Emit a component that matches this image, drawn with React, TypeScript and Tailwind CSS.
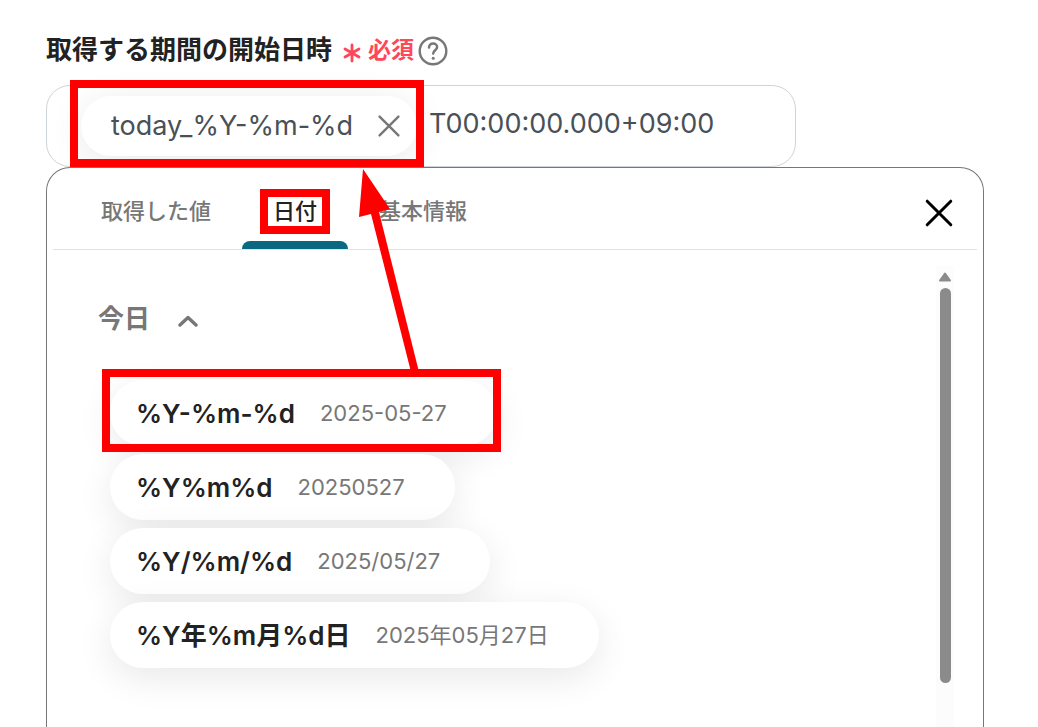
import { useState } from 'react';

type DateFormat = {
  id: string;
  pattern: string;
  sample: string;
};

const tabs = [
  { id: 'values', label: '取得した値' },
  { id: 'date', label: '日付' },
  { id: 'basic', label: '基本情報' },
];

const formats: DateFormat[] = [
  { id: 'f1', pattern: '%Y-%m-%d', sample: '2025-05-27' },
  { id: 'f2', pattern: '%Y%m%d', sample: '20250527' },
  { id: 'f3', pattern: '%Y/%m/%d', sample: '2025/05/27' },
  { id: 'f4', pattern: '%Y年%m月%d日', sample: '2025年05月27日' },
];

// Red frame drawn over the element that is being explained
function Highlight({ className }: { className: string }) {
  return <span aria-hidden="true" className={`pointer-events-none absolute z-10 border-8 border-[#ff0000] ${className}`} />;
}

function Cross({ className, strokeWidth }: { className: string; strokeWidth: number }) {
  return (
    <svg viewBox="0 0 28 28" fill="none" stroke="currentColor" strokeWidth={strokeWidth} strokeLinecap="round" className={className}>
      <path d="M3 3 25 25M25 3 3 25" />
    </svg>
  );
}

function HelpIcon() {
  return (
    <svg viewBox="0 0 30 30" fill="none" stroke="currentColor" className="h-[30px] w-[30px]">
      <circle cx="15" cy="15" r="13.3" strokeWidth="2.4" />
      <path d="M11 11.500c0-2.300 1.700-3.900 4.100-3.900 2.300 0 4 1.500 4 3.500 0 3-3.900 3.300-3.900 6.400" strokeWidth="2.500" strokeLinecap="round" />
      <circle cx="15.2" cy="22.2" r="1.500" fill="currentColor" stroke="none" />
    </svg>
  );
}

export default function App() {
  const [activeTab, setActiveTab] = useState('date');
  const [open, setOpen] = useState(true);
  const [suffix, setSuffix] = useState('T00:00:00.000+09:00');

  return (
    <div className="flex h-screen flex-col overflow-hidden bg-white pt-8 pr-[54px] pl-[46px] font-['Inter','Noto_Sans_CJK_JP',sans-serif] text-[#222]">
      {/* Label */}
      <div className="flex h-9 shrink-0 items-center">
        <label htmlFor="start" className="text-[26px] leading-9 font-semibold whitespace-nowrap">取得する期間の開始日時</label>
        <svg viewBox="0 0 20 20" stroke="#ff4757" strokeWidth="2.8" strokeLinecap="round" className="mt-1.5 ml-2.5 h-5 w-5">
          <path d="M10 2v16M3 6l14 8M17 6 3 14" />
        </svg>
        <span className="ml-1.5 text-[23px] leading-9 font-semibold whitespace-nowrap text-[#ff4757]">必須</span>
        <button type="button" aria-label="ヘルプ" className="mt-0.5 ml-1 text-[#777]">
          <HelpIcon />
        </button>
      </div>

      {/* Field */}
      <div className="mt-[17px] flex h-[82px] w-4/5 shrink-0 items-center rounded-3xl border border-[#ced4da] pl-[34px] text-[27px] text-[#495057]">
        <div className="relative flex h-[60px] shrink-0 items-center rounded-full bg-white pr-4 pl-[30px] shadow-[0_6px_36px_rgba(0,0,0,0.09)]">
          <span className="w-[250px] leading-9">today_%Y-%m-%d</span>
          <button type="button" aria-label="削除" className="ml-4 text-[#777]">
            <Cross className="h-6 w-6" strokeWidth={2.8} />
          </button>
          <Highlight className="-top-4 -right-[7px] -bottom-[11px] -left-[11px]" />
        </div>
        <input
          id="start"
          type="text"
          value={suffix}
          onChange={e => setSuffix(e.target.value)}
          className="mb-1 ml-3 min-w-0 flex-1 bg-transparent outline-none"
        />
      </div>

      {/* Picker panel */}
      <div className="relative flex min-h-0 flex-1 flex-col rounded-t-3xl border border-b-0 border-[#777] bg-white px-1.5">
        <div className="flex h-[82px] shrink-0 items-stretch justify-between border-b border-[#e2e2e2] pr-[23px] pl-[17px]">
          <div role="tablist" className="flex">
            {tabs.map(tab => (
              <button
                key={tab.id}
                type="button"
                role="tab"
                aria-selected={activeTab === tab.id}
                onClick={() => setActiveTab(tab.id)}
                className={`relative px-[31px] pt-1.5 text-[22px] font-medium whitespace-nowrap ${activeTab === tab.id ? 'text-[#222]' : 'text-[#777]'}`}
              >
                {tab.label}
                {activeTab === tab.id && <span className="absolute inset-x-0 bottom-0 h-2 rounded-t-lg bg-[#0a6880]" />}
                {tab.id === 'date' && <Highlight className="inset-x-[18px] top-[21px] bottom-[15px]" />}
              </button>
            ))}
          </div>
          <button type="button" aria-label="閉じる" className="mt-2 self-center">
            <Cross className="h-[30px] w-[30px] text-black" strokeWidth={2.8} />
          </button>
        </div>

        <div className="flex min-h-0 flex-1 justify-between overflow-hidden">
          <div className="pt-[51px] pl-[45px]">
            <button
              type="button"
              aria-expanded={open}
              onClick={() => setOpen(!open)}
              className="flex h-9 items-center gap-7 text-[26px] leading-9 font-semibold text-[#777]"
            >
              今日
              <svg viewBox="0 0 20 12" fill="none" stroke="currentColor" strokeWidth="3.4" strokeLinecap="round" strokeLinejoin="round" className={`mt-1 h-3 w-5 ${open ? '' : 'rotate-180'}`}>
                <path d="M2 10 10 2.500 18 10" />
              </svg>
            </button>

            {open && (
              <ul className="mt-[43px] ml-3 flex flex-col items-start gap-2">
                {formats.map(format => (
                  <li key={format.id} className="relative">
                    <button
                      type="button"
                      className="flex h-[66px] items-center gap-[25px] rounded-full bg-white pr-[50px] pl-[26px] whitespace-nowrap shadow-[0_10px_36px_rgba(0,0,0,0.09)]"
                    >
                      <span className="text-[26px] font-semibold">{format.pattern}</span>
                      <span className="text-[22px] text-[#777]">{format.sample}</span>
                    </button>
                    {format.id === 'f1' && <Highlight className="-top-[11px] -right-1 -bottom-1.5 -left-2" />}
                  </li>
                ))}
              </ul>
            )}
          </div>

          {/* Scrollbar */}
          <div aria-hidden="true" className="mt-4 mr-[23px] flex w-[18px] flex-col items-center bg-[#fcfcfc] pt-1.5 text-[#8b8b8b]">
            <svg viewBox="0 0 14 10" fill="currentColor" stroke="currentColor" strokeWidth="2" strokeLinejoin="round" className="h-2.5 w-3.5 shrink-0">
              <path d="M7 1.500 12 8.500H2Z" />
            </svg>
            <div className="mt-1.5 min-h-0 w-full flex-1">
              <div className="mx-auto h-[90%] w-[11px] rounded-full bg-[#8b8b8b]" />
            </div>
          </div>
        </div>

        {/* Arrow from the chosen format up to the field */}
        <svg aria-hidden="true" viewBox="0 0 400 204" fill="#ff0000" className="pointer-events-none absolute top-0 left-0 h-[204px] w-[400px]">
          <path d="M316 1 343 41 332 44 372 204H364L324 46 312 49Z" />
        </svg>
      </div>
    </div>
  );
}
